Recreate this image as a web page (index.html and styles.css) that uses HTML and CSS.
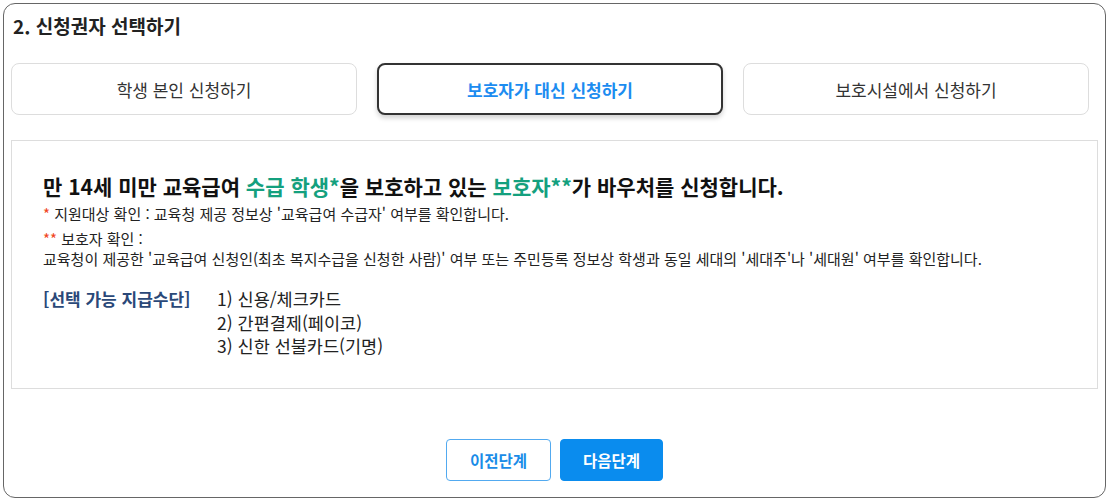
FILE: index.html
```html
<!DOCTYPE html>
<html lang="ko">
<head>
    <meta charset="UTF-8">
    <meta name="viewport" content="width=device-width, initial-scale=1.0">
    <title>신청권자 선택하기</title>
    <link rel="stylesheet" href="styles.css">
</head>
<body>
    <div class="frame">
        <h2 class="step-title">2. 신청권자 선택하기</h2>

        <div class="tabs">
            <button type="button" class="tab">학생 본인 신청하기</button>
            <button type="button" class="tab active">보호자가 대신 신청하기</button>
            <button type="button" class="tab">보호시설에서 신청하기</button>
        </div>

        <div class="info-box">
            <p class="headline">만 14세 미만 교육급여 <span class="green">수급 학생*</span>을 보호하고 있는 <span class="green">보호자**</span>가 바우처를 신청합니다.</p>
            <p class="note"><span class="star">*</span> 지원대상 확인 : 교육청 제공 정보상 '교육급여 수급자' 여부를 확인합니다.</p>
            <p class="note"><span class="star">**</span> 보호자 확인 :<br>교육청이 제공한 '교육급여 신청인(최초 복지수급을 신청한 사람)' 여부 또는 주민등록 정보상 학생과 동일 세대의 '세대주'나 '세대원' 여부를 확인합니다.</p>

            <div class="pay-methods">
                <span class="pay-label">[선택 가능 지급수단]</span>
                <ul class="pay-list">
                    <li>1) 신용/체크카드</li>
                    <li>2) 간편결제(페이코)</li>
                    <li>3) 신한 선불카드(기명)</li>
                </ul>
            </div>
        </div>

        <div class="actions">
            <button type="button" class="btn btn-outline">이전단계</button>
            <button type="button" class="btn btn-primary">다음단계</button>
        </div>
    </div>
</body>
</html>
```

FILE: styles.css
```css
body {
    margin: 0;
    padding: 3px;
    background: #fff;
    font-family: "Noto Sans CJK KR", "Noto Sans", sans-serif;
    color: #222;
}

.frame {
    box-sizing: border-box;
    height: 495px;
    border: 1.5px solid #666;
    border-radius: 12px;
    padding: 0 7px;
}

.step-title {
    margin: 0;
    padding: 8px 0 0 2px;
    height: 47px;
    box-sizing: border-box;
    font-size: 19px;
    font-weight: bold;
    line-height: 28px;
    color: #222;
}

.tabs {
    display: grid;
    grid-template-columns: repeat(3, 346px);
    column-gap: 20px;
    margin-top: 12px;
}

.tab {
    height: 52px;
    background: #fff;
    border: 1px solid #ddd;
    border-radius: 8px;
    font-family: inherit;
    font-size: 17px;
    color: #333;
    cursor: pointer;
}

.tab.active {
    border: 2px solid #333;
    color: #1c8cf0;
    font-weight: bold;
    box-shadow: 0 3px 5px rgba(0, 0, 0, 0.18);
}

.info-box {
    margin-top: 25px;
    border: 1px solid #ddd;
    padding: 30px 31px 30px;
}

.headline {
    margin: 0 0 3px;
    font-size: 21px;
    font-weight: bold;
    line-height: 30px;
    color: #111;
}

.green {
    color: #14a07e;
}

.note {
    margin: 0 0 5px;
    font-size: 15px;
    line-height: 20px;
    color: #222;
}

.star {
    color: #f0451c;
}

.pay-methods {
    display: flex;
    margin-top: 18px;
}

.pay-label {
    width: 174px;
    font-size: 17px;
    font-weight: bold;
    line-height: 23.5px;
    color: #2a4878;
}

.pay-list {
    margin: 0;
    padding: 0;
    list-style: none;
    font-size: 17.5px;
    line-height: 23.5px;
    color: #222;
}

.actions {
    display: flex;
    justify-content: center;
    gap: 9px;
    margin-top: 50px;
}

.btn {
    height: 42px;
    padding: 0 22px;
    border-radius: 4px;
    font-family: inherit;
    font-size: 15.5px;
    font-weight: bold;
    cursor: pointer;
}

.btn-outline {
    background: #fff;
    border: 1px solid #52aaf0;
    color: #1a8ce8;
    padding: 0 23px;
}

.btn-primary {
    background: #0a8cee;
    border: 1px solid #0a8cee;
    color: #fff;
}
```
